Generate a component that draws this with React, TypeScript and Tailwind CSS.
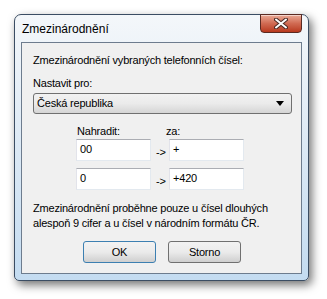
import React from 'react';

const ui = { fontFamily: '"Liberation Sans", Arial, sans-serif' };

function TextBox({ value }: { value: string }) {
  return (
    <div className="h-[22px] w-[75px] border border-[#abadb3] border-r-[#e3e9ef] border-b-[#e3e9ef] border-l-[#e2e3ea] bg-white pl-[3px] text-[11px] leading-[18px] text-black">
      {value}
    </div>
  );
}

function Button({ label, focused }: { label: string; focused?: boolean }) {
  return (
    <div
      className={`h-[22px] w-[73px] rounded-[3px] border ${
        focused ? 'border-[#3c7fb1]' : 'border-[#707070]'
      } bg-gradient-to-b from-[#f2f2f2] via-[#ebebeb] to-[#cfcfcf] text-center text-[11px] leading-[20px] text-black`}
    >
      {label}
    </div>
  );
}

export default function App() {
  return (
    <div className="relative h-[299px] w-[327px] bg-white pl-[14px] pt-[14px]" style={ui}>
      {/* Window frame */}
      <div className="relative flex h-[267px] w-[295px] flex-col rounded-t-[7px] rounded-b-[5px] border border-[#3b4d63] bg-gradient-to-b from-[#f4f7fa] via-[#dce9f5] to-[#c4dcf1] px-[6px] pb-[6px] shadow-[3px_4px_10px_rgba(0,0,0,0.55)]">
        {/* Title bar */}
        <div className="flex h-[27px] shrink-0 items-center pl-[1px] pt-[1px] text-[12px] text-black">
          Zmezinárodnění
        </div>

        {/* Close button */}
        <div className="absolute right-[6px] top-[-1px] flex h-[19px] w-[42px] items-center justify-center rounded-b-[4px] border border-[#5a2a22] bg-gradient-to-b from-[#e9a996] via-[#d06a52] to-[#b8381d] shadow-[inset_0_1px_0_rgba(255,255,255,0.5)]">
          <svg width="14" height="11" viewBox="0 0 14 11">
            <path d="M2 1.5 L12 9.5 M12 1.5 L2 9.5" stroke="#4a2a24" strokeWidth="4" strokeLinecap="round" />
            <path d="M2 1.5 L12 9.5 M12 1.5 L2 9.5" stroke="#ffffff" strokeWidth="2" strokeLinecap="round" />
          </svg>
        </div>

        {/* Client area */}
        <div className="flex flex-1 flex-col border border-[#6d7c8e] bg-[#f0f0f0] pl-[11px] pt-[10px] text-[11px] leading-[15px] tracking-[-0.2px] text-black">
          <div>Zmezinárodnění vybraných telefonních čísel:</div>
          <div className="mt-[8px]">Nastavit pro:</div>

          {/* Combo box */}
          <div className="mt-[2px] flex h-[21px] w-[259px] items-center justify-between rounded-[3px] border border-[#707070] bg-gradient-to-b from-[#f2f2f2] via-[#ebebeb] to-[#d5d5d5] pl-[3px] pr-[7px]">
            <span>Česká republika</span>
            <svg width="8" height="5" viewBox="0 0 8 5">
              <path d="M0 0 H8 L4 5 Z" fill="#000" />
            </svg>
          </div>

          {/* Replace table */}
          <div className="mt-[10px] flex pl-[44px]">
            <div className="w-[89px]">Nahradit:</div>
            <div>za:</div>
          </div>
          <div className="flex items-center pl-[43px]">
            <TextBox value="00" />
            <span className="mt-[4px] w-[18px] pl-[5px]">-&gt;</span>
            <TextBox value="+" />
          </div>
          <div className="mt-[7px] flex items-center pl-[43px]">
            <TextBox value="0" />
            <span className="mt-[4px] w-[18px] pl-[5px]">-&gt;</span>
            <TextBox value="+420" />
          </div>

          {/* Note */}
          <div className="mt-[11px]">
            Zmezinárodnění proběhne pouze u čísel dlouhých
            <br />
            alespoň 9 cifer a u čísel v národním formátu ČR.
          </div>

          {/* Buttons */}
          <div className="mt-[10px] flex gap-[12px] pl-[50px]">
            <Button label="OK" focused />
            <Button label="Storno" />
          </div>
        </div>
      </div>
    </div>
  );
}
